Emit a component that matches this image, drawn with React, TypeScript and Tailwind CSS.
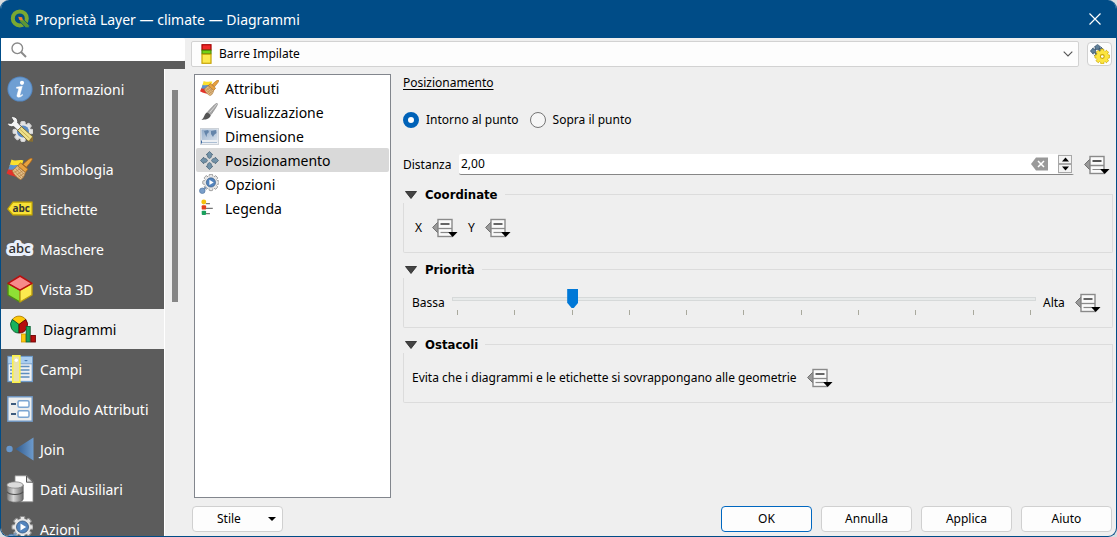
import React, { useState } from "react";

type IconProps = { className?: string };

const UI_FONT = "font-['Noto_Sans','Open_Sans',sans-serif]";
const SMALL_FONT = "font-['Noto_Sans','DejaVu_Sans_Condensed',sans-serif]";
const GROUP_FONT = "font-['DejaVu_Sans_Condensed','DejaVu_Sans',sans-serif]";

/* ---------- icons ---------- */

const QgisLogo = ({ className }: IconProps) => (
  <svg viewBox="0 0 20 20" className={className} aria-hidden="true">
    <circle cx="9.800" cy="9.400" r="7" fill="none" stroke="#7aa832" strokeWidth="4" />
    <path d="M9.500 9.300l3.400.5 6.300 6.400v2.600h-3.400L9.800 12.600z" fill="#5d9634" stroke="#004c87" strokeWidth="0.800" />
    <path d="M8.200 7.800l4 .4.6 3.200-3.400-.3z" fill="#ee7f2d" />
  </svg>
);

const InfoIcon = ({ className }: IconProps) => (
  <svg viewBox="0 0 26 26" className={className} aria-hidden="true">
    <circle cx="13" cy="13" r="12.600" fill="#5587c0" />
    <circle cx="13" cy="13" r="11.600" fill="#6f9fd3" />
    <circle cx="15" cy="6.800" r="2.100" fill="#fff" />
    <path d="M9.500 11.200l5.800-1-2.400 8.800c-.2.9.6.9 2.400-.6l.5.7c-1.800 2.200-6.400 3.200-5.800.2l1.800-6.800-2.400-.3z" fill="#fff" stroke="#fff" strokeWidth="0.500" />
  </svg>
);

const Gear = ({ cx, cy, r, fill, stroke }: { cx: number; cy: number; r: number; fill: string; stroke: string }) => (
  <g transform={`translate(${cx} ${cy}) scale(${r / 10})`}>
    {[0, 45, 90, 135].map((a) => (
      <rect key={a} x="-2.200" y="-10" width="4.400" height="20" rx="1" fill={fill} stroke={stroke} strokeWidth="1" transform={`rotate(${a})`} />
    ))}
    <circle r="7.800" fill={fill} />
  </g>
);

const SourceIcon = ({ className }: IconProps) => (
  <svg viewBox="0 0 26 26" className={className} aria-hidden="true">
    <Gear cx={16} cy={15.5} r={10} fill="#e4e4e4" stroke="#d0d0d0" />
    <circle cx="16" cy="15.500" r="6" fill="#5d8cc4" />
    <path d="M4 .900c4-1.200 7.500 1.800 6.600 5.900l4.400 4.400-3.800 3.600-4.400-4.200C3.200 11.300.6 9.600.1 7l4.200.4 2.300-2.200z" fill="#f4f4f4" stroke="#4d4d4d" strokeWidth="0.900" />
    <path d="M10.500 14.500l4-3.800 11 9.800.4 4.800-4.800-.3z" fill="#efe08c" stroke="#77692a" strokeWidth="0.900" />
    <path d="M12.800 13.200l9.800 9" stroke="#c5b254" strokeWidth="1" />
    <path d="M21.800 24.800l3.600-4.200.4 4.700z" fill="#8a6a2f" />
  </svg>
);

const BrushIcon = ({ className }: IconProps) => (
  <svg viewBox="0 0 26 22" className={className} aria-hidden="true">
    <path d="M5 1.500c4 2.200 7.500-.6 12 1L14.500 9 3 8z" fill="#fbe02e" />
    <path d="M3.500 6.500c4 1.600 8-.2 11 .8l-4 6-9-1z" fill="#5c93cf" />
    <path d="M1.800 11.200c3 1.300 6 .2 8.500.8l3 8C9 18 4.500 18.500 0 15.300z" fill="#e3322b" />
    <path d="M25.300.300c1.400 1-.6 3.200-5.400 9l-3.400-2.900C21.500 1.600 24.200-.5 25.300.3z" fill="#e8a23f" stroke="#a86519" strokeWidth="0.800" />
    <path d="M14 4.800l7.400 6.400-2.600 3.200-7.600-6.400z" fill="#e8a23f" stroke="#a86519" strokeWidth="0.800" />
    <path d="M11 7.800l7.800 6.600c-.6 3.700-2.600 5.900-4.600 7.300-4.200-2.200-7-5.200-8.400-9z" fill="#e3bf8b" stroke="#a97534" strokeWidth="0.800" />
    <path d="M9 10.500l7.500 8.500M11.500 9.500l5.500 6.500M7.500 12.500l7 7.500M8 14.500l6.500-4.500M10 17l6.500-4.500M12 19l6-4" stroke="#b3803f" strokeWidth="0.700" />
  </svg>
);

const LabelIcon = ({ className }: IconProps) => (
  <svg viewBox="0 0 26 16" className={className} aria-hidden="true">
    <path d="M.800 8L6 1.200h19v12.600H6z" fill="#f8e137" stroke="#c7a900" strokeWidth="1.200" />
    <text x="5.500" y="11" fontSize="10" fontWeight="700" fontFamily="Open Sans, sans-serif" fill="#333">abc</text>
  </svg>
);

const MaskIcon = ({ className }: IconProps) => (
  <svg viewBox="0 0 30 20" className={className} aria-hidden="true">
    <text x="3.500" y="14" fontSize="13" fontWeight="600" fontFamily="Open Sans, sans-serif" fill="#333" stroke="#eaf0fb" strokeWidth="6" strokeLinejoin="round" paintOrder="stroke">abc</text>
  </svg>
);

const CubeIcon = ({ className }: IconProps) => (
  <svg viewBox="0 0 26 28" className={className} aria-hidden="true">
    <path d="M1 8.500l12 6.700V27L1 20z" fill="#8fe035" stroke="#4f8f10" strokeWidth="1.400" strokeLinejoin="round" />
    <path d="M25 8.500l-12 6.700V27l12-7z" fill="#fce94f" stroke="#b99b10" strokeWidth="1.400" strokeLinejoin="round" />
    <path d="M13 1l12 7.300-12 6.900L1 8.300z" fill="#f78a8a" stroke="#b80f0f" strokeWidth="1.500" strokeLinejoin="round" />
  </svg>
);

const DiagramIcon = ({ className }: IconProps) => (
  <svg viewBox="0 0 26 28" className={className} aria-hidden="true">
    <path d="M9 9.500L2.300 4.500A8.400 8.400 0 0 1 15.800 4.500z" fill="#fdc90a" stroke="#a87800" strokeWidth="0.800" />
    <path d="M9 9.500L2.300 4.500A8.400 8.400 0 0 0 9 18z" fill="#17b35c" stroke="#07552a" strokeWidth="0.900" />
    <path d="M9 9.500l6.800-5A8.400 8.400 0 0 1 9 18z" fill="#b80e0e" stroke="#5f0505" strokeWidth="0.900" />
    <rect x="11.500" y="19" width="4.200" height="8" fill="#fdc90a" stroke="#d19a00" strokeWidth="0.800" />
    <rect x="16.200" y="11.500" width="4" height="15.500" fill="#17a35a" stroke="#0a6132" strokeWidth="0.900" />
    <rect x="20.900" y="20.500" width="4.500" height="6.500" fill="#b80e0e" stroke="#6d0505" strokeWidth="0.900" />
  </svg>
);

const FieldsIcon = ({ className }: IconProps) => (
  <svg viewBox="0 0 26 28" className={className} aria-hidden="true">
    <rect x="1" y="1.500" width="24.300" height="25" fill="#eef0f2" stroke="#6f9ccb" strokeWidth="1.300" />
    <rect x="1.600" y="2" width="23" height="6.500" fill="#a9cdf0" />
    <path d="M1 8.800h24" stroke="#6f9ccb" />
    <path d="M13 11.500h9.500M13 15h9.500M13 18.500h9.500M13 22h9.500M3 11.500h3M3 15h3M3 18.500h3M3 22h3" stroke="#5e8ebf" strokeWidth="1.300" />
    <path d="M17 5l2 1.600L21 5z" fill="#477ab1" />
    <rect x="5.800" y=".8" width="7" height="26.400" fill="#e9e2ae" stroke="#fbf14a" strokeWidth="1.600" />
    <circle cx="9.300" cy="5.200" r="1.700" fill="#fff" />
  </svg>
);

const FormIcon = ({ className }: IconProps) => (
  <svg viewBox="0 0 26 26" className={className} aria-hidden="true">
    <rect x=".8" y=".8" width="24.400" height="24.400" fill="#eceded" stroke="#6f97c4" strokeWidth="1.400" />
    <rect x="11" y="4.800" width="11" height="6.400" rx="1.500" fill="#fff" stroke="#7ba5d2" strokeWidth="1.500" />
    <rect x="11" y="14.800" width="11" height="6.400" rx="1.500" fill="#fff" stroke="#7ba5d2" strokeWidth="1.500" />
    <path d="M4 8h5M4 18h5" stroke="#3c5b7e" strokeWidth="2.200" />
  </svg>
);

const JoinIcon = ({ className }: IconProps) => (
  <svg viewBox="0 0 28 26" className={className} aria-hidden="true">
    <defs>
      <linearGradient id="join-shade" x1="0" x2="1" y1="0" y2="0">
        <stop offset="0" stopColor="#325c8e" />
        <stop offset="1" stopColor="#6d9bcd" />
      </linearGradient>
    </defs>
    <circle cx="3.500" cy="13" r="3.200" fill="#6796cb" />
    <path d="M9.500 13L27.500 1.500v23z" fill="url(#join-shade)" />
  </svg>
);

const AuxIcon = ({ className }: IconProps) => (
  <svg viewBox="0 0 28 28" className={className} aria-hidden="true">
    <defs>
      <linearGradient id="aux-shade" x1="0" x2="1" y1="0" y2="0">
        <stop offset="0" stopColor="#777" />
        <stop offset=".4" stopColor="#d8d8d8" />
        <stop offset="1" stopColor="#6a6a6a" />
      </linearGradient>
    </defs>
    <path d="M9 .800h12l6 6v20H9z" fill="#fff" stroke="#8a8a8a" strokeWidth="0.800" />
    <path d="M20.500 1v6.200H27z" fill="#ddd" stroke="#555" strokeWidth="1" />
    <path d="M.800 10v14c0 4.300 16.400 4.300 16.400 0V10z" fill="url(#aux-shade)" stroke="#5c5c5c" strokeWidth="0.700" />
    <path d="M1 16.800c2 3.600 14 3.600 16 0" fill="none" stroke="#505050" strokeWidth="1.200" />
    <ellipse cx="9" cy="10" rx="8.200" ry="3.200" fill="#dcdcdc" stroke="#777" strokeWidth="0.700" />
  </svg>
);

const ActionIcon = ({ className }: IconProps) => (
  <svg viewBox="0 0 26 26" className={className} aria-hidden="true">
    <Gear cx={15.5} cy={11} r={10.6} fill="#e6e6e6" stroke="#8a8a8a" />
    <circle cx="15.500" cy="11" r="6" fill="#5384bd" stroke="#34567f" strokeWidth="0.800" />
    <path d="M13.500 7.600l5.600 3.400-5.600 3.400z" fill="#fff" />
    <path d="M9.500 17l-4 3.500" stroke="#7d97b5" strokeWidth="2.500" />
    <circle cx="4.300" cy="21.800" r="3.600" fill="#7a9fca" stroke="#5578a2" strokeWidth="0.900" />
  </svg>
);

const PaintIcon = ({ className }: IconProps) => (
  <svg viewBox="0 0 19 19" className={className} aria-hidden="true">
    <path d="M18.200.600c.8.600-.6 3.200-6.500 11.600l-3.400-2.900C14 2.600 17.200-.1 18.200.6z" fill="#a8a8a8" stroke="#777" strokeWidth="0.600" />
    <path d="M17.700 1.300l-7.500 8.800" stroke="#ddd" strokeWidth="0.900" />
    <path d="M8 9.800l3.400 2.900c-.5 3.600-4.600 5.300-9.900 4.900 3.300-1.300 2.600-6.600 6.500-7.800z" fill="#555" />
  </svg>
);

const SizeIcon = ({ className }: IconProps) => (
  <svg viewBox="0 0 19 17" className={className} aria-hidden="true">
    <defs>
      <linearGradient id="map-shade" x1="0" x2="1" y1="0" y2="1">
        <stop offset="0" stopColor="#93acc9" />
        <stop offset="1" stopColor="#d6e0eb" />
      </linearGradient>
    </defs>
    <rect x=".5" y=".5" width="18" height="16" fill="#eceff3" stroke="#cdd2d8" />
    <rect x="1.500" y="1.500" width="16" height="10.500" fill="url(#map-shade)" />
    <path d="M4 3l4-1 1 2-2 2-.5 3L5 6zM11 3l5-1 .5 3-2.500 2-1 2-2-3z" fill="#6485aa" />
    <path d="M1.500 14.500h16" stroke="#6d8db2" strokeDasharray="1 1" />
    <path d="M1.500 12.500v3" stroke="#3c68a0" />
  </svg>
);

const MoveIcon = ({ className }: IconProps) => (
  <svg viewBox="0 0 19 19" className={className} aria-hidden="true">
    <g fill="#7292a8" stroke="#4e6a7e" strokeWidth="0.800" strokeLinejoin="round">
      {[0, 90, 180, 270].map((a) => (
        <path key={a} d="M9.500.500l3.400 3.300h-1.600v2.400L9.500 7.500 7.700 6.200V3.800H6.100z" transform={`rotate(${a} 9.500 9.500)`} />
      ))}
    </g>
  </svg>
);

const LegendIcon = ({ className }: IconProps) => (
  <svg viewBox="0 0 19 19" className={className} aria-hidden="true">
    <path d="M6 5h4.500M6 10h7.500M6 15.500h4.500" stroke="#777" strokeWidth="1.300" />
    <circle cx="4" cy="3.200" r="2.600" fill="#f6c20c" />
    <rect x="1.800" y="6.600" width="4.600" height="4.600" rx="1" fill="#e2401c" />
    <rect x="1.800" y="12.300" width="4.600" height="4.600" rx="1" fill="#1aa05c" />
  </svg>
);

const StackedIcon = ({ className }: IconProps) => (
  <svg viewBox="0 0 11 21" className={className} aria-hidden="true">
    <rect x=".75" y=".75" width="9.500" height="5.500" fill="#ef2929" stroke="#a40000" strokeWidth="1.200" />
    <rect x=".75" y="6.600" width="9.500" height="3.600" fill="#73d216" stroke="#4e8a06" strokeWidth="1.200" />
    <rect x=".75" y="10.750" width="9.500" height="9.500" fill="#fce94f" stroke="#c4a000" strokeWidth="1.200" />
  </svg>
);

const PlacementEngineIcon = ({ className }: IconProps) => (
  <svg viewBox="0 0 20 20" className={className} aria-hidden="true">
    <g fill="#5f7f99" stroke="#34506a" strokeWidth="0.700" strokeLinejoin="round">
      <path d="M7.500.400l3.200 2.600H9.500v2.400h-4V3H4.300z" />
      <path d="M.400 7l2.800-3.200V5h2.400v4H3.200v1.200z" />
      <path d="M7.500 14l-3.200-2.600h1.200V9h4v2.400h1.200z" />
      <path d="M14 6l-3-3v1.500H9v3.500h3z" />
    </g>
    <Gear cx={12.3} cy={12.5} r={7.4} fill="#fce53f" stroke="#c9a500" />
    <circle cx="12.300" cy="12.500" r="1.900" fill="#fff" stroke="#c9a500" strokeWidth="1.100" />
  </svg>
);

/* ---------- small controls ---------- */

const OverrideButton = ({ label }: { label: string }) => (
  <button type="button" aria-label={label} className="h-5 w-[26px] shrink-0">
    <svg viewBox="0 0 26 20" className="h-5 w-[26px]" aria-hidden="true">
      <path d="M.600 9.500L6 4v11z" fill="#9a9a9a" stroke="#6f6f6f" />
      <rect x="6" y="1.500" width="14" height="17" fill="#fafafa" stroke="#8a8a8a" strokeWidth="1.400" />
      <path d="M6 10.500h14" stroke="#8a8a8a" strokeWidth="1.300" />
      <path d="M8.500 6h9" stroke="#555" strokeWidth="1.800" />
      <path d="M8.500 14.500h8" stroke="#888" strokeWidth="1.200" />
      <path d="M16 14h9.500l-4.750 5z" fill="#000" />
    </svg>
  </button>
);

const Group = ({ id, title, children }: { id: string; title: string; children: React.ReactNode }) => {
  const [open, setOpen] = useState(true);
  return (
    <section aria-labelledby={id} className="mt-[9px] first-of-type:mt-3">
      <div className={`flex h-4 items-center ${GROUP_FONT}`}>
        <button
          type="button"
          id={id}
          aria-expanded={open}
          onClick={() => setOpen(!open)}
          className="flex items-center gap-2 pr-[7px] pl-[2px] text-[13px] leading-4 font-bold"
        >
          <svg viewBox="0 0 12 8" className="h-2 w-3" aria-hidden="true">
            <path d="M.500.500h11L6 7.500z" fill="#444" stroke="#222" strokeWidth="0.800" />
          </svg>
          {title}
        </button>
        <span className="h-[9px] flex-1 self-end border-t border-r border-[#dcdcdc]" />
      </div>
      {open && (
        <div className="flex h-[50px] items-center rounded-b-[2px] border border-t-0 border-[#dcdcdc] pl-2">{children}</div>
      )}
    </section>
  );
};

const DialogButton = ({ children, primary }: { children: React.ReactNode; primary?: boolean }) => (
  <button
    type="button"
    className={`h-[26px] w-[91px] rounded-[4px] border bg-[#fdfdfd] ${primary ? "border-[#0067c0]" : "border-[#d0d0d0]"}`}
  >
    {children}
  </button>
);

/* ---------- data ---------- */

const pages = [
  { name: "Informazioni", icon: <InfoIcon className="size-[26px]" /> },
  { name: "Sorgente", icon: <SourceIcon className="size-[26px]" /> },
  { name: "Simbologia", icon: <BrushIcon className="h-[22px] w-[27px]" /> },
  { name: "Etichette", icon: <LabelIcon className="h-4 w-[26px]" /> },
  { name: "Maschere", icon: <MaskIcon className="h-5 w-[30px] shrink-0" /> },
  { name: "Vista 3D", icon: <CubeIcon className="h-7 w-[26px]" /> },
  { name: "Diagrammi", icon: <DiagramIcon className="h-7 w-[26px]" /> },
  { name: "Campi", icon: <FieldsIcon className="h-7 w-[26px]" /> },
  { name: "Modulo Attributi", icon: <FormIcon className="size-[26px]" /> },
  { name: "Join", icon: <JoinIcon className="h-[26px] w-7" /> },
  { name: "Dati Ausiliari", icon: <AuxIcon className="size-7" /> },
  { name: "Azioni", icon: <ActionIcon className="size-[26px]" /> },
];

const tabs = [
  { name: "Attributi", icon: <BrushIcon className="h-4 w-[19px]" /> },
  { name: "Visualizzazione", icon: <PaintIcon className="size-[18px]" /> },
  { name: "Dimensione", icon: <SizeIcon className="h-[17px] w-[19px]" /> },
  { name: "Posizionamento", icon: <MoveIcon className="size-[19px]" /> },
  { name: "Opzioni", icon: <ActionIcon className="size-5" /> },
  { name: "Legenda", icon: <LegendIcon className="size-[18px]" /> },
];

export default function App() {
  const [page, setPage] = useState("Diagrammi");
  const [tab, setTab] = useState("Posizionamento");
  const [distance, setDistance] = useState("2,00");

  return (
    <div className="h-screen bg-[#d9dde0]">
      <div className={`flex h-full flex-col overflow-hidden rounded-[9px] border-x border-b border-[#004c87] bg-[#efefef] text-[12px] text-black ${SMALL_FONT}`}>
        <header className={`flex h-[38px] shrink-0 items-center bg-[#004c87] pr-[14px] pl-[9px] text-white ${UI_FONT}`}>
          <QgisLogo className="size-5" />
          <h1 className="ml-[5px] flex-1 text-[14px]">Proprietà Layer — climate — Diagrammi</h1>
          <button type="button" aria-label="Chiudi" className="size-[14px]">
            <svg viewBox="0 0 14 14" className="size-[14px]" aria-hidden="true">
              <path d="M1.500 1.500l11 11M12.500 1.500l-11 11" stroke="#fff" strokeWidth="1.200" />
            </svg>
          </button>
        </header>

        <div className="flex min-h-0 flex-1">
          <aside className="flex w-[184px] shrink-0 flex-col">
            <label className="flex h-[23px] shrink-0 items-center rounded-[2px] bg-white pl-[10px]">
              <svg viewBox="0 0 16 16" className="size-4 shrink-0" aria-hidden="true">
                <circle cx="6.300" cy="6.300" r="5.300" fill="none" stroke="#8a8a8a" strokeWidth="1.400" />
                <path d="M10 10l5 5" stroke="#8a8a8a" strokeWidth="2" />
              </svg>
              <input type="search" aria-label="Cerca" className="ml-2 w-full min-w-0 bg-transparent outline-none" />
            </label>
            <div className="h-2 shrink-0 bg-[#5c5c5c]" />
            <div className="flex min-h-0 flex-1">
              <nav className={`min-w-0 flex-1 overflow-hidden bg-[#5c5c5c] text-[14px] text-white ${UI_FONT}`}>
                {pages.map((p) => (
                  <button
                    key={p.name}
                    type="button"
                    aria-current={p.name === page ? "page" : undefined}
                    onClick={() => setPage(p.name)}
                    className={`flex h-10 w-full items-center gap-[5px] text-left whitespace-nowrap ${p.name === page ? "bg-[#efefef] pl-[6px] text-black" : "pl-[3px]"}`}
                  >
                    <span className="flex w-[31px] shrink-0 justify-center">{p.icon}</span>
                    {p.name}
                  </button>
                ))}
              </nav>
              <div className="w-[21px] shrink-0 border-l border-white pt-[21px] pl-[7px]">
                <div className="h-[212px] w-[6px] bg-[#868686]" />
              </div>
            </div>
          </aside>

          <main className="flex min-w-0 flex-1 flex-col pt-[3px] pr-1 pb-1 pl-[6px]">
            <div className="flex items-center gap-2">
              <div className="relative flex-1">
                <StackedIcon className="pointer-events-none absolute top-[3px] left-[10px] h-[20px] w-[11px]" />
                <select
                  aria-label="Tipo di diagramma"
                  className="h-[26px] w-full appearance-none rounded-[2px] border border-[#d2d2d2] bg-[#fdfdfd] pl-[27px] outline-none"
                >
                  <option>Barre Impilate</option>
                </select>
                <svg viewBox="0 0 10 6" className="pointer-events-none absolute top-[10px] right-[6px] h-[6px] w-[10px]" aria-hidden="true">
                  <path d="M.700.700L5 5l4.300-4.300" fill="none" stroke="#555" strokeWidth="1.100" />
                </svg>
              </div>
              <button
                type="button"
                aria-label="Impostazioni del motore di posizionamento"
                className="flex h-6 w-[25px] items-center justify-center rounded-[4px] border border-[#d0d0d0] bg-[#fdfdfd]"
              >
                <PlacementEngineIcon className="size-5" />
              </button>
            </div>

            <div className="mt-[7px] flex min-h-0 flex-1 gap-3 pl-[3px]">
              <div role="tablist" aria-orientation="vertical" className={`w-[197px] shrink-0 border border-[#82868d] bg-white p-[1px] text-[14px] ${UI_FONT}`}>
                {tabs.map((t) => (
                  <button
                    key={t.name}
                    type="button"
                    role="tab"
                    aria-selected={t.name === tab}
                    onClick={() => setTab(t.name)}
                    className={`flex h-6 w-full items-center gap-[6px] rounded-[2px] pl-[3px] text-left ${t.name === tab ? "bg-[#d9d9d9]" : ""}`}
                  >
                    <span className="flex w-5 shrink-0 justify-center">{t.icon}</span>
                    {t.name}
                  </button>
                ))}
              </div>

              <div className="-mr-px min-w-0 flex-1">
                <h2 className="leading-[18px] underline underline-offset-2">Posizionamento</h2>

                <div role="radiogroup" aria-label="Posizionamento" className="mt-4 flex h-6 items-center gap-[11px]">
                  {["Intorno al punto", "Sopra il punto"].map((name, i) => (
                    <label key={name} className="flex items-center gap-[7px]">
                      <input
                        type="radio"
                        name="placement"
                        defaultChecked={i === 0}
                        className="size-4 appearance-none rounded-full border border-[#757575] bg-[#f6f6f6] checked:border-[5px] checked:border-[#0062b8] checked:bg-white"
                      />
                      {name}
                    </label>
                  ))}
                </div>

                <div className="mt-[22px] flex h-[21px] items-center pr-[3px]">
                  <label htmlFor="distance" className="w-14">Distanza</label>
                  <div className="flex h-[21px] flex-1 items-center rounded-[2px] border-b border-[#868686] bg-white">
                    <input
                      id="distance"
                      type="text"
                      value={distance}
                      onChange={(e) => setDistance(e.target.value)}
                      className="min-w-0 flex-1 bg-transparent pl-[2px] outline-none"
                    />
                    <button type="button" aria-label="Cancella" onClick={() => setDistance("")} className="mr-[10px] h-[14px] w-[17px]">
                      <svg viewBox="0 0 17 14" className="h-[14px] w-[17px]" aria-hidden="true">
                        <path d="M0 7l5-6.500h12v13H5z" fill="#999" />
                        <path d="M7 4l6 6M13 4l-6 6" stroke="#fff" strokeWidth="1.500" />
                      </svg>
                    </button>
                    <div className="flex h-full w-4 flex-col justify-center bg-[#efefef] pr-[2px]">
                      {[
                        { name: "Aumenta", d: "M3 6.500h7L6.500 2.500z" },
                        { name: "Diminuisci", d: "M3 2.500h7L6.500 6.500z" },
                      ].map((s) => (
                        <button key={s.name} type="button" aria-label={s.name} className="flex h-[9px] items-center justify-center border border-[#a8a8a8] bg-[#f3f3f3]">
                          <svg viewBox="0 0 13 9" className="h-[9px] w-[13px] shrink-0" aria-hidden="true">
                            <path d={s.d} fill="#000" />
                          </svg>
                        </button>
                      ))}
                    </div>
                    <div className="h-full w-[7px] shrink-0 bg-[#efefef] hidden" />
                  </div>
                  <div className="ml-[10px] flex">
                    <OverrideButton label="Sovrascrittura distanza" />
                  </div>
                </div>

                <Group id="group-coordinates" title="Coordinate">
                  <div className="flex items-center gap-[10px] pl-[3px]">
                    <span>X</span>
                    <OverrideButton label="Sovrascrittura X" />
                    <span>Y</span>
                    <OverrideButton label="Sovrascrittura Y" />
                  </div>
                </Group>

                <Group id="group-priority" title="Priorità">
                  <label htmlFor="priority" className="w-10">Bassa</label>
                  <div className="flex flex-1 flex-col pb-px">
                    <input
                      id="priority"
                      type="range"
                      min={0}
                      max={10}
                      defaultValue={2}
                      className="block h-5 w-full appearance-none bg-transparent [&::-webkit-slider-runnable-track]:h-1 [&::-webkit-slider-runnable-track]:border [&::-webkit-slider-runnable-track]:border-[#d6d9d9] [&::-webkit-slider-runnable-track]:bg-[#e7eaea] [&::-webkit-slider-thumb]:-mt-[9px] [&::-webkit-slider-thumb]:h-[19px] [&::-webkit-slider-thumb]:w-[11px] [&::-webkit-slider-thumb]:appearance-none [&::-webkit-slider-thumb]:bg-[#0078d7] [&::-webkit-slider-thumb]:[clip-path:polygon(0_0,100%_0,100%_72%,60%_100%,40%_100%,0_72%)]"
                    />
                    <div className="mt-px flex justify-between px-[5px]">
                      {Array.from({ length: 11 }, (_, i) => (
                        <span key={i} className="h-[5px] w-px bg-[#a9a99d]" />
                      ))}
                    </div>
                  </div>
                  <span className="ml-[7px] w-8">Alta</span>
                  <div className="mr-[11px] flex">
                    <OverrideButton label="Sovrascrittura priorità" />
                  </div>
                </Group>

                <Group id="group-obstacles" title="Ostacoli">
                  <span className="mr-[10px]">Evita che i diagrammi e le etichette si sovrappongano alle geometrie</span>
                  <OverrideButton label="Sovrascrittura ostacoli" />
                </Group>
              </div>
            </div>

            <footer className="mt-2 flex gap-[9px] pl-px">
              <button type="button" className="flex h-[26px] w-[91px] items-center justify-between rounded-[4px] border border-[#d0d0d0] bg-[#fdfdfd] pr-[6px] pl-6">
                Stile
                <svg viewBox="0 0 8 4" className="h-1 w-2" aria-hidden="true">
                  <path d="M0 0h8L4 4z" fill="#000" />
                </svg>
              </button>
              <span className="flex-1" />
              <DialogButton primary>OK</DialogButton>
              <DialogButton>Annulla</DialogButton>
              <DialogButton>Applica</DialogButton>
              <DialogButton>Aiuto</DialogButton>
            </footer>
          </main>
        </div>
      </div>
    </div>
  );
}
